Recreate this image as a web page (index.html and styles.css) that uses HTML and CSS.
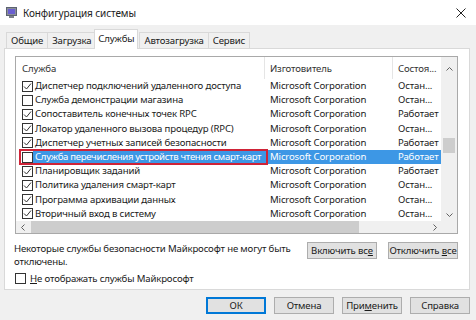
FILE: index.html
```html
<!DOCTYPE html>
<html lang="ru">
<head>
<meta charset="UTF-8">
<title>Конфигурация системы</title>
<link rel="stylesheet" href="styles.css">
</head>
<body>
<div class="window">
  <div class="titlebar">
    <svg class="app-icon" width="11" height="11" viewBox="0 0 11 11">
      <rect x="0.5" y="0.5" width="10" height="8" fill="#8a8f99" stroke="#5c6270"/>
      <rect x="2" y="2" width="7" height="5" fill="#6a5fd0"/>
      <rect x="3" y="9" width="5" height="2" fill="#7b808a"/>
    </svg>
    <span class="title">Конфигурация системы</span>
    <svg class="close" width="10" height="10" viewBox="0 0 10 10">
      <path d="M0.5 0.5 L9.5 9.5 M9.5 0.5 L0.5 9.5" stroke="#222" stroke-width="1"/>
    </svg>
  </div>

  <div class="client">
    <ul class="tabs">
      <li class="tab">Общие</li>
      <li class="tab">Загрузка</li>
      <li class="tab active">Службы</li>
      <li class="tab">Автозагрузка</li>
      <li class="tab">Сервис</li>
    </ul>

    <div class="panel">
      <div class="list">
        <div class="list-main">
          <div class="list-head">
            <div class="c1">Служба</div>
            <div class="c2">Изготовитель</div>
            <div class="c3">Состоя...</div>
          </div>
          <div class="row"><div class="c1"><span class="cb on"></span><span class="label">Диспетчер подключений удаленного доступа</span></div><div class="c2">Microsoft Corporation</div><div class="c3">Остан...</div></div>
          <div class="row"><div class="c1"><span class="cb"></span><span class="label">Служба демонстрации магазина</span></div><div class="c2">Microsoft Corporation</div><div class="c3">Остан...</div></div>
          <div class="row"><div class="c1"><span class="cb on"></span><span class="label">Сопоставитель конечных точек RPC</span></div><div class="c2">Microsoft Corporation</div><div class="c3">Работает</div></div>
          <div class="row"><div class="c1"><span class="cb on"></span><span class="label">Локатор удаленного вызова процедур (RPC)</span></div><div class="c2">Microsoft Corporation</div><div class="c3">Остан...</div></div>
          <div class="row"><div class="c1"><span class="cb on"></span><span class="label">Диспетчер учетных записей безопасности</span></div><div class="c2">Microsoft Corporation</div><div class="c3">Работает</div></div>
          <div class="row sel"><span class="mark"></span><div class="c1"><span class="cb"></span><span class="label">Служба перечисления устройств чтения смарт-карт</span></div><div class="c2">Microsoft Corporation</div><div class="c3">Работает</div></div>
          <div class="row"><div class="c1"><span class="cb on"></span><span class="label">Планировщик заданий</span></div><div class="c2">Microsoft Corporation</div><div class="c3">Работает</div></div>
          <div class="row"><div class="c1"><span class="cb on"></span><span class="label">Политика удаления смарт-карт</span></div><div class="c2">Microsoft Corporation</div><div class="c3">Остан...</div></div>
          <div class="row"><div class="c1"><span class="cb on"></span><span class="label">Программа архивации данных</span></div><div class="c2">Microsoft Corporation</div><div class="c3">Остан...</div></div>
          <div class="row"><div class="c1"><span class="cb on"></span><span class="label">Вторичный вход в систему</span></div><div class="c2">Microsoft Corporation</div><div class="c3">Остан...</div></div>
        </div>
        <div class="vscroll">
          <svg class="arrow" width="7" height="4" viewBox="0 0 7 4"><path d="M0.5 3.5 L3.5 0.5 L6.5 3.5" fill="none" stroke="#606060"/></svg>
          <div class="vtrack"><div class="vthumb"></div></div>
          <svg class="arrow" width="7" height="4" viewBox="0 0 7 4"><path d="M0.5 0.5 L3.5 3.5 L6.5 0.5" fill="none" stroke="#606060"/></svg>
        </div>
        <div class="hscroll">
          <svg class="arrow" width="4" height="7" viewBox="0 0 4 7"><path d="M3.5 0.5 L0.5 3.5 L3.5 6.5" fill="none" stroke="#606060"/></svg>
          <div class="htrack"><div class="hthumb"></div></div>
          <svg class="arrow" width="4" height="7" viewBox="0 0 4 7"><path d="M0.5 0.5 L3.5 3.5 L0.5 6.5" fill="none" stroke="#606060"/></svg>
        </div>
        <div class="corner"></div>
      </div>

      <div class="note-row">
        <p class="note">Некоторые службы безопасности Майкрософт не могут быть отключены.</p>
        <button class="btn">Включить вс<u>е</u></button>
        <button class="btn">Отключить <u>в</u>се</button>
      </div>

      <label class="hide-ms"><span class="cb box"></span><span><u>Н</u>е отображать службы Майкрософт</span></label>
    </div>

    <div class="footer">
      <button class="btn wide default">ОК</button>
      <button class="btn wide">Отмена</button>
      <button class="btn wide">При<u>м</u>енить</button>
      <button class="btn wide">Справка</button>
    </div>
  </div>
</div>
</body>
</html>
```

FILE: styles.css
```css
body {
  margin: 0;
  font-family: "Noto Sans", "Open Sans", sans-serif;
  font-size: 9.6px;
  letter-spacing: -0.15px;
  color: #1a1a1a;
  overflow: hidden;
}

.window {
  width: 476px;
  height: 320px;
  display: flex;
  flex-direction: column;
  background: #f0f0f0;
}

/* title bar */
.titlebar {
  height: 25px;
  background: #fff;
  display: flex;
  align-items: center;
  padding: 0 10px 0 6px;
}
.app-icon {
  margin-right: 6px;
}
.title {
  font-size: 10px;
  letter-spacing: -0.1px;
  color: #222;
  flex: 1;
}

.client {
  flex: 1;
  padding: 4px 6px 0 4px;
  display: flex;
  flex-direction: column;
}

/* tabs */
.tabs {
  list-style: none;
  margin: 0;
  padding: 0 0 0 2px;
  height: 19px;
  display: flex;
  align-items: flex-end;
}
.tab {
  height: 15px;
  line-height: 15px;
  padding: 0 4px;
  border: 1px solid #d9d9d9;
  border-bottom: none;
  margin-right: -1px;
  background: #f0f0f0;
}
.tab.active {
  height: 19px;
  line-height: 17px;
  background: #fff;
  margin: 0 1px -1px -1px;
  padding: 0 3px;
  position: relative;
  z-index: 1;
}

/* panel */
.panel {
  height: 242px;
  box-sizing: border-box;
  background: #fff;
  border: 1px solid #d9d9d9;
  padding: 7px 11px 0 10px;
}

.list {
  height: 178px;
  box-sizing: border-box;
  border: 1px solid #a9a9a9;
  display: grid;
  grid-template-columns: 1fr 16px;
  grid-template-rows: 1fr 12px;
}
.list-main {
  overflow: hidden;
}
.list-head,
.row {
  display: flex;
  white-space: nowrap;
}
.list-head {
  height: 22px;
  line-height: 23px;
  color: #333;
}
.list-head .c1,
.list-head .c2 {
  border-right: 1px solid #e5e5e5;
}
.c1 {
  width: 249px;
  box-sizing: border-box;
  padding-left: 6px;
  display: flex;
  align-items: center;
  overflow: hidden;
}
.c2 {
  width: 128px;
  box-sizing: border-box;
  padding-left: 5px;
}
.c3 {
  width: 48px;
  box-sizing: border-box;
  padding-left: 5px;
  overflow: hidden;
}
.row {
  height: 14.2px;
  line-height: 14px;
  position: relative;
}
.label {
  flex: 1;
  padding-left: 2px;
}
.row.sel .label,
.row.sel .c2,
.row.sel .c3 {
  background: #3d97e5;
  color: #fff;
}
.row.sel .label {
  letter-spacing: -0.32px;
}
.row.sel .mark {
  position: absolute;
  left: 3px;
  top: -1px;
  width: 249px;
  height: 16px;
  box-sizing: border-box;
  border: 2px solid #cf2337;
  z-index: 2;
}

/* checkboxes */
.cb {
  width: 11px;
  height: 11px;
  box-sizing: border-box;
  border: 1px solid #333;
  background: #fff;
  flex: none;
}
.cb.on {
  background: #fff url("data:image/svg+xml,%3Csvg xmlns='http://www.w3.org/2000/svg' width='9' height='9'%3E%3Cpath d='M1 4.5 L3.5 7 L8 1.5' fill='none' stroke='%23333' stroke-width='1'/%3E%3C/svg%3E") center no-repeat;
}

/* scrollbars */
.vscroll {
  background: #f0f0f0;
  display: flex;
  flex-direction: column;
  align-items: center;
  padding: 10px 0 4px;
}
.vtrack {
  flex: 1;
  width: 100%;
  padding-top: 67px;
}
.vthumb {
  width: 12px;
  height: 15px;
  margin: 0 auto;
  background: #cdcdcd;
}
.hscroll {
  background: #f0f0f0;
  display: flex;
  align-items: center;
  padding: 0 4px 0 5px;
}
.htrack {
  flex: 1;
  height: 100%;
  padding-left: 6px;
}
.hthumb {
  width: 328px;
  height: 100%;
  background: #cdcdcd;
}
.corner {
  background: #f0f0f0;
}

/* notes and buttons */
.note-row {
  display: flex;
  align-items: flex-start;
  gap: 11px;
  margin-top: 7px;
}
.note {
  flex: 1;
  margin: 1px 0 0 -1px;
  line-height: 13px;
}
.btn {
  font-family: inherit;
  font-size: 9.6px;
  letter-spacing: -0.15px;
  white-space: nowrap;
  color: #1a1a1a;
  height: 17px;
  width: 70px;
  padding: 0;
  background: #e1e1e1;
  border: 1px solid #adadad;
  margin-top: 1px;
}
.hide-ms {
  display: flex;
  align-items: center;
  gap: 4px;
  height: 12px;
  margin-top: 4px;
}

.footer {
  display: flex;
  justify-content: flex-end;
  gap: 8px;
  padding-top: 7px;
}
.btn.wide {
  width: 60px;
  margin: 0;
}
.btn.default {
  border: 2px solid #0078d7;
}
```
